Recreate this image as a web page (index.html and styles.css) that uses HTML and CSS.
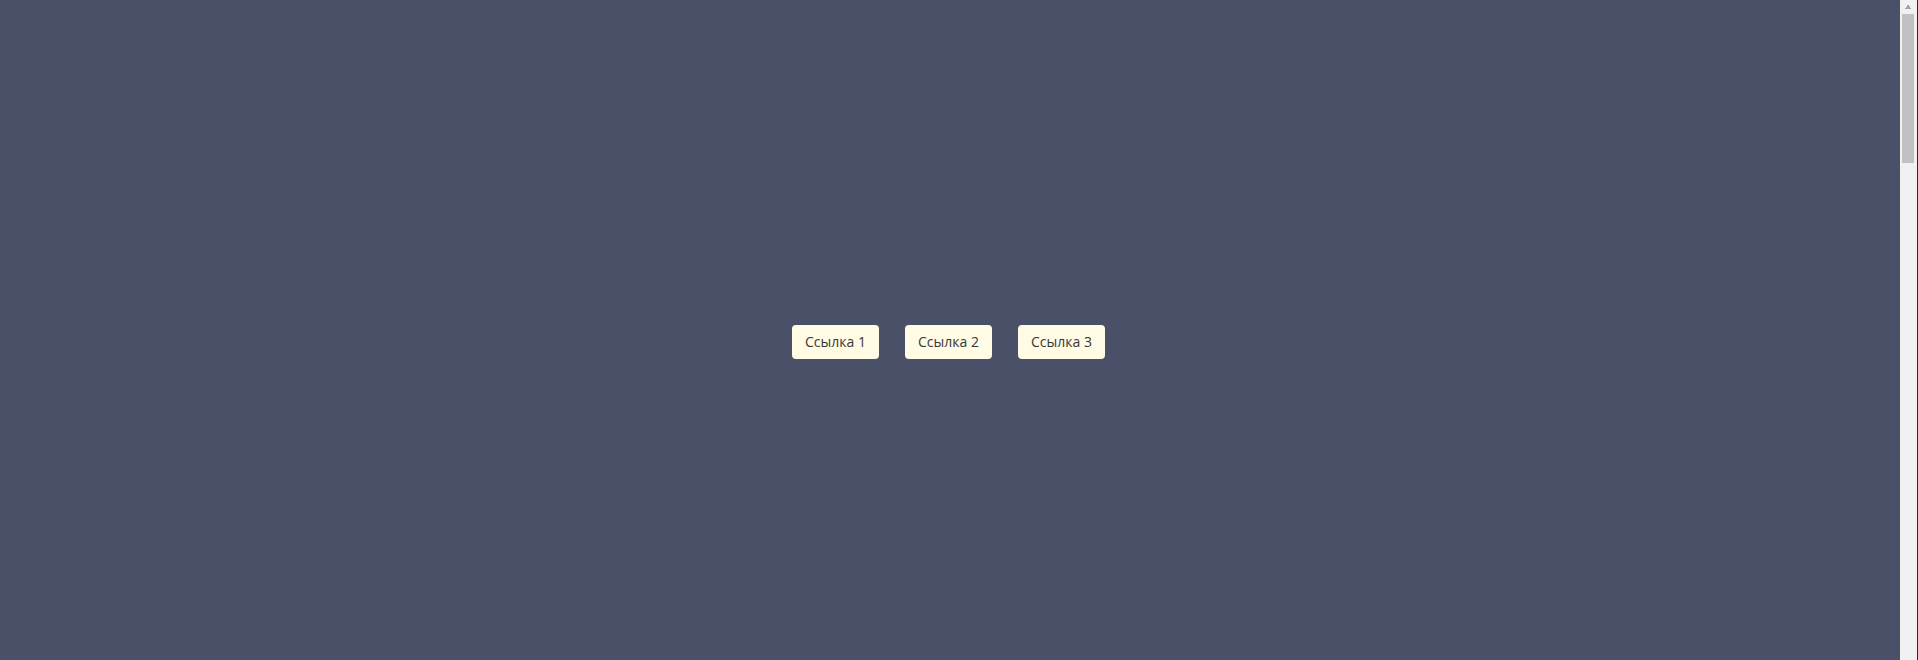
FILE: index.html
```html
<!DOCTYPE html>
<html lang="ru">
<head>
    <meta charset="UTF-8">
    <meta name="viewport" content="width=device-width, initial-scale=1.0">
    <title>Ссылки</title>
    <link rel="stylesheet" href="styles.css">
</head>
<body>
    <div class="window">
        <div class="page">
            <nav class="links">
                <a href="#" class="link">Ссылка 1</a>
                <a href="#" class="link">Ссылка 2</a>
                <a href="#" class="link">Ссылка 3</a>
            </nav>
        </div>
        <!-- полоса прокрутки -->
        <div class="scrollbar">
            <div class="scroll-up"></div>
            <div class="scroll-thumb"></div>
        </div>
    </div>
</body>
</html>
```

FILE: styles.css
```css
html, body {
    height: 100%;
    overflow: hidden;
}
body {
    margin: 0;
    font-family: "Open Sans", Arial, sans-serif;
    background-color: #4b5069;
}
.window {
    display: flex;
    height: 100vh;
}
.page {
    flex: 1;
}
.links {
    display: flex;
    justify-content: center;
    gap: 26px;
    padding-top: 325px;
    padding-right: 3px;
}
.link {
    display: block;
    width: 87px;
    height: 34px;
    line-height: 34px;
    text-align: center;
    font-size: 14px;
    color: #383838;
    text-decoration: none;
    background-color: #fffbe5;
    border-radius: 4px;
    box-sizing: border-box;
}
.scrollbar {
    width: 17px;
    background-color: #f1f1f1;
    border-right: 1px solid #2a2a2a;
    display: flex;
    flex-direction: column;
}
.scroll-up {
    height: 14px;
    background-image:
        linear-gradient(to top left, #a3a3a3 50%, transparent 50%),
        linear-gradient(to top right, #a3a3a3 50%, transparent 50%);
    background-size: 4px 4px;
    background-position: 4px 5px, 8px 5px;
    background-repeat: no-repeat;
}
.scroll-thumb {
    height: 149px;
    margin: 0 3px 0 2px;
    background-color: #c1c1c1;
}
```
